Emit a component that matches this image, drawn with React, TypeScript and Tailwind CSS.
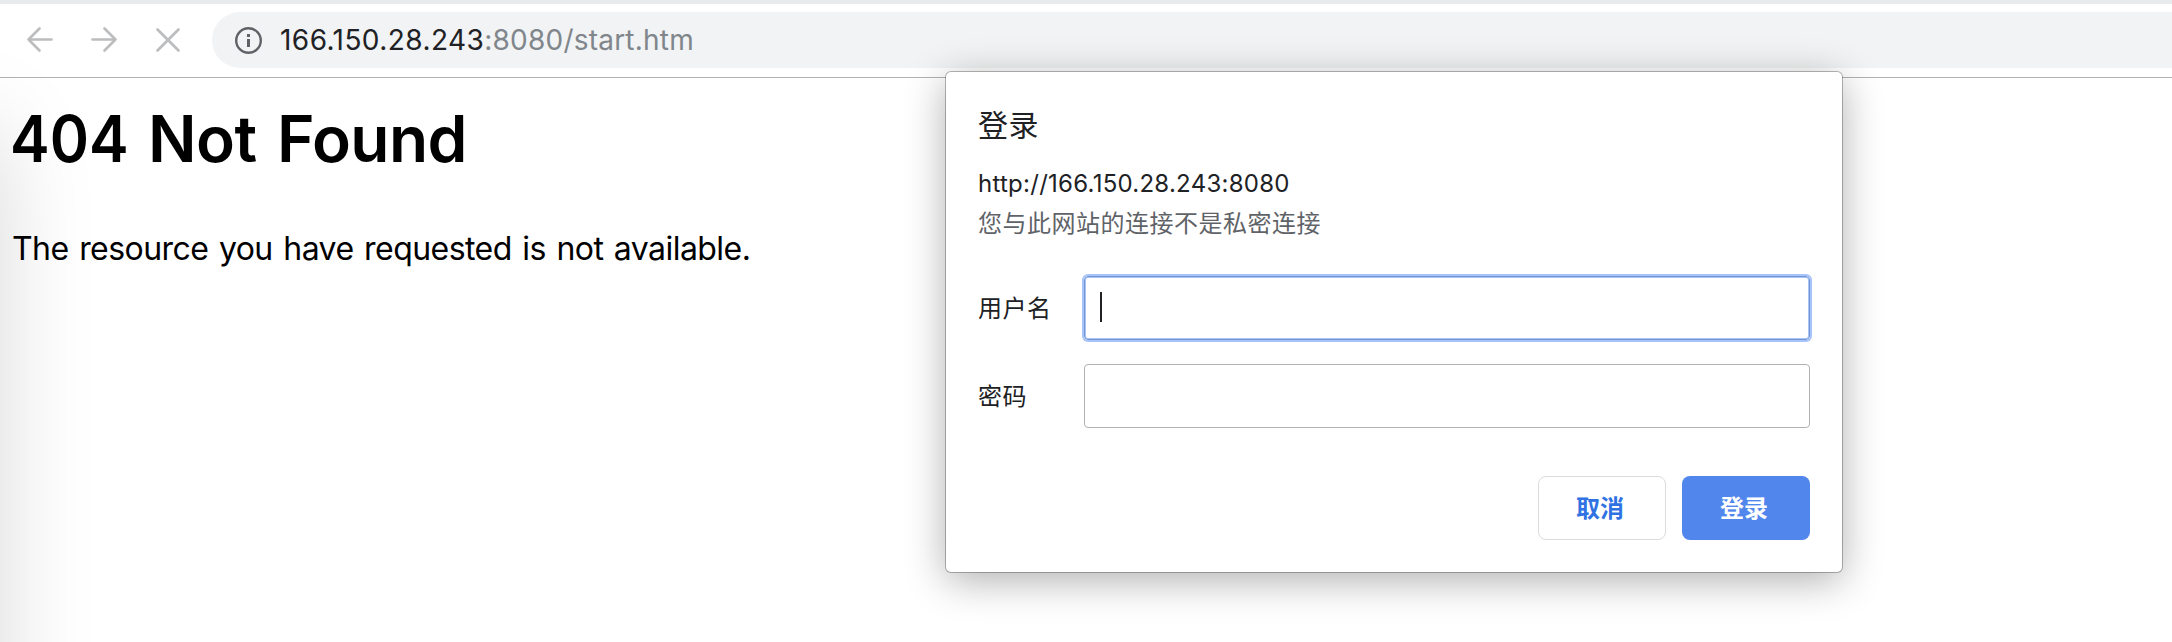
function NavIcons() {
  return (
    <div className="flex h-full w-[212px] items-center pl-[22px]">
      <div className="flex gap-[28px]">
        <svg width="36" height="36" viewBox="0 0 36 36" fill="none" stroke="#bcbdbf" strokeWidth="2.7" strokeLinecap="round" strokeLinejoin="round">
          <path d="M29.5 17.5H6.5M17.5 6.5L6.5 17.5L17.5 28.5" />
        </svg>
        <svg width="36" height="36" viewBox="0 0 36 36" fill="none" stroke="#bcbdbf" strokeWidth="2.7" strokeLinecap="round" strokeLinejoin="round">
          <path d="M6.5 17.5H29.5M18.5 6.5L29.5 17.5L18.5 28.5" />
        </svg>
        <svg width="36" height="36" viewBox="0 0 36 36" fill="none" stroke="#bcbdbf" strokeWidth="2.7" strokeLinecap="round">
          <path d="M7.5 7.5L28.5 28.5M28.5 7.5L7.5 28.5" />
        </svg>
      </div>
    </div>
  );
}

function InfoIcon() {
  return (
    <svg width="28" height="28" viewBox="0 0 28 28" className="shrink-0">
      <circle cx="14.5" cy="14.5" r="12.3" fill="none" stroke="#5f6368" strokeWidth="2.4" />
      <rect x="13" y="8" width="3" height="3" fill="#5f6368" />
      <rect x="13" y="13" width="3" height="8" fill="#5f6368" />
    </svg>
  );
}

function Toolbar() {
  return (
    <header className="h-[78px] border-t-4 border-b border-t-[#e8eaed] border-b-[#b1b2b3] bg-white">
      <div className="flex h-[72px] items-center">
        <NavIcons />
        <div className="flex h-[56px] flex-1 items-center rounded-l-full bg-[#f1f3f4] pl-[22px]">
          <InfoIcon />
          <span className="ml-[18px] text-[28px] leading-[56px] whitespace-nowrap text-[#202124]">
            <span className="tracking-[0.44px]">166.150.28.243</span>
            <span className="tracking-[0.22px] text-[#80868b]">:8080/start.htm</span>
          </span>
        </div>
      </div>
    </header>
  );
}

function LoginDialog() {
  return (
    <div className="absolute top-[72px] left-[946px] flex h-[500px] w-[896px] flex-col rounded-[5px] bg-white px-8 pt-[31px] font-['Noto_Sans_CJK_SC',sans-serif] text-[24px] text-[#202124] shadow-[0_0_0_1px_rgba(0,0,0,0.27),0_8px_40px_rgba(0,0,0,0.32)]">
      <h2 className="h-[40px] text-[30px] leading-[40px] tracking-[0.5px]">登录</h2>
      <p className="mt-[21px] h-[40px] font-[Inter,sans-serif] leading-[40px] tracking-[0.26px]">http://166.150.28.243:8080</p>
      <p className="h-[38px] leading-[36px] tracking-[0.5px] text-[#5f6368]">您与此网站的连接不是私密连接</p>
      <form className="mt-[34px] flex flex-col gap-6">
        <label className="flex h-16 items-center">
          <span className="h-16 w-[106px] leading-[62px] tracking-[0.5px]">用户名</span>
          <span className="flex h-16 flex-1 items-center rounded-[4px] border border-[#7396d6] pl-[15px] shadow-[0_0_0_2px_#a8c3f8,inset_0_0_0_1px_#a8c3f8]">
            <span className="h-[30px] w-[2px] -translate-y-px bg-[#202124]" />
          </span>
        </label>
        <label className="flex h-16 items-center">
          <span className="h-16 w-[106px] leading-[62px] tracking-[0.5px]">密码</span>
          <span className="h-16 flex-1 rounded-[4px] border border-[#b0b1b3]" />
        </label>
      </form>
      <div className="mt-12 flex justify-end gap-4 font-bold">
        <button className="flex h-16 w-32 justify-center rounded-[8px] border border-[#dadce0] pr-[4px] leading-[59px] text-[#3072e2]">取消</button>
        <button className="flex h-16 w-32 justify-center rounded-[8px] bg-[#5186ec] pr-[4px] leading-[61px] text-white">登录</button>
      </div>
    </div>
  );
}

export default function App() {
  return (
    <div className="relative h-[642px] w-[2172px] overflow-hidden bg-white font-[Inter,sans-serif]">
      <Toolbar />
      <main className="pl-[10px] text-black">
        <h1 className="flex h-[80px] pt-[21px] text-[64px] leading-[80px] font-semibold">
          <span className="w-[138px] origin-left scale-x-[0.93]">404</span>
          <span className="w-[129px] tracking-[-0.5px]">Not</span>
          <span className="tracking-[-0.6px]">Found</span>
        </h1>
        <p className="mt-[71px] pl-[2px] text-[32px] leading-[40px] tracking-[-0.55px] [word-spacing:2.1px]">The resource you have requested is not available.</p>
      </main>
      <div className="pointer-events-none absolute top-[130px] -left-[400px] h-[900px] w-[400px] shadow-[0_0_90px_rgba(0,0,0,0.15)]" />
      <LoginDialog />
    </div>
  );
}
